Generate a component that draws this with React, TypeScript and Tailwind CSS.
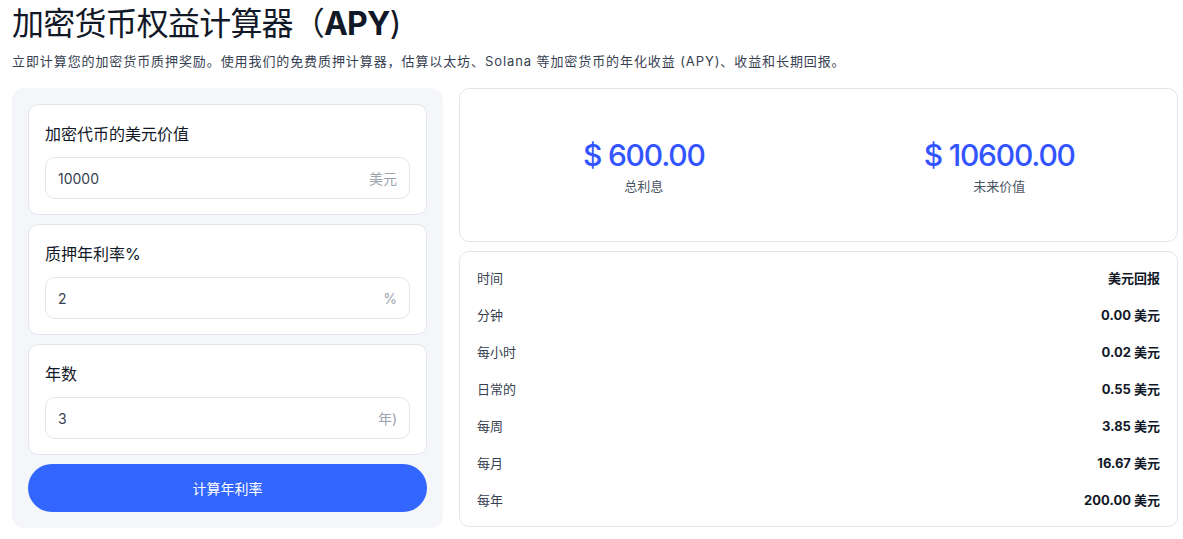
import React from "react"

const font = { fontFamily: '"Inter", "Noto Sans CJK SC", sans-serif' }

const fields = [
	{ label: "加密代币的美元价值", value: "10000", unit: "美元" },
	{ label: "质押年利率%", value: "2", unit: "%" },
	{ label: "年数", value: "3", unit: "年)" },
]

const rows = [
	["分钟", "0.00 美元"],
	["每小时", "0.02 美元"],
	["日常的", "0.55 美元"],
	["每周", "3.85 美元"],
	["每月", "16.67 美元"],
	["每年", "200.00 美元"],
]

const App = () => {
	return (
		<div className="w-[1183px] h-[539px] bg-white overflow-hidden pl-3 pr-[5px]" style={font}>
			<h1 className="text-[32px] leading-[40px] pt-[4px] text-[#111827] font-normal tracking-tight">
				加密货币权益计算器（<span className="font-bold">APY</span>)
			</h1>
			<p className="text-[13px] leading-[18px] mt-[8px] text-[#374151] tracking-[0.07em]">
				立即计算您的加密货币质押奖励。使用我们的免费质押计算器，估算以太坊、Solana 等加密货币的年化收益 (APY)、收益和长期回报。
			</p>

			<div className="flex gap-4 mt-[18px]">
				<div className="w-[431px] shrink-0 bg-[#f5f6fa] rounded-xl p-4 flex flex-col gap-[9px]">
					{fields.map((f) => (
						<div key={f.label} className="bg-white border border-[#e3e5ec] rounded-[10px] px-4 pt-[19px] pb-[15px]">
							<div className="text-[16px] leading-[20px] text-[#111827]">{f.label}</div>
							<div className="mt-[13px] h-[42px] border border-[#e3e5ec] rounded-[10px] flex items-center justify-between pl-3 pr-3">
								<span className="text-[14px] text-[#374151]">{f.value}</span>
								<span className="text-[14px] text-[#9ca3af]">{f.unit}</span>
							</div>
						</div>
					))}
					<button className="h-[48px] rounded-full bg-[#3366ff] text-white text-[14px]">计算年利率</button>
				</div>

				<div className="flex-1 flex flex-col gap-[9px]">
					<div className="h-[154px] border border-[#e3e5ec] rounded-[10px] flex items-center">
						<div className="flex-1 flex flex-col items-center pt-[2px] pl-[6px]">
							<div className="text-[30px] leading-[36px] text-[#3355ff] font-medium tracking-[-0.04em]">$ 600.00</div>
							<div className="text-[13px] leading-[18px] text-[#4b5563] mt-[4px]">总利息</div>
						</div>
						<div className="flex-1 flex flex-col items-center pt-[2px]">
							<div className="text-[30px] leading-[36px] text-[#3355ff] font-medium tracking-[-0.04em]">$ 10600.00</div>
							<div className="text-[13px] leading-[18px] text-[#4b5563] mt-[4px]">未来价值</div>
						</div>
					</div>
					<div className="h-[276px] border border-[#e3e5ec] rounded-[10px] px-[17px] pt-[8px]">
						<div className="flex justify-between items-center h-[37px] text-[13px]">
							<span className="text-[#374151]">时间</span>
							<span className="font-bold text-[#111827]">美元回报</span>
						</div>
						{rows.map(([k, v]) => (
							<div key={k} className="flex justify-between items-center h-[37px] text-[13px]">
								<span className="text-[#374151]">{k}</span>
								<span className="font-bold text-[#111827]">{v}</span>
							</div>
						))}
					</div>
				</div>
			</div>
		</div>
	)
}

export default App
